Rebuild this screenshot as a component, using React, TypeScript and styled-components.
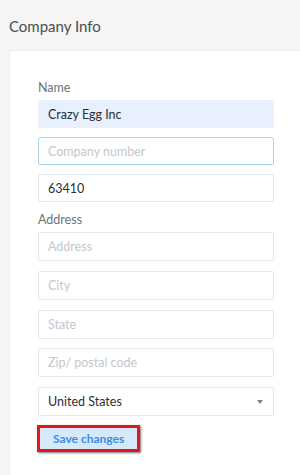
import styled, { createGlobalStyle } from "styled-components";

const GlobalStyle = createGlobalStyle`
  html, body {
    margin: 0;
    padding: 0;
    background: #f5f5f5;
    font-family: Lato, "Open Sans", "Liberation Sans", sans-serif;
    overflow: hidden;
  }
`;

const Page = styled.div`
  width: 300px;
  height: 475px;
  overflow: hidden;
  padding: 16px 0 0 9px;
  box-sizing: border-box;
`;

const Title = styled.h2`
  margin: 0 0 14px;
  font-size: 15px;
  font-weight: 400;
  color: #4a4d52;
  line-height: 20px;
`;

const CardBox = styled.div`
  width: 320px;
  min-height: 460px;
  background: #fff;
  border: 1px solid #ececec;
  border-radius: 3px;
  padding: 29px 0 0 28px;
  box-sizing: border-box;
`;

const Form = styled.form`
  width: 236px;
  display: flex;
  flex-direction: column;
`;

const Label = styled.label`
  font-size: 12.5px;
  color: #6f7277;
  line-height: 16px;
  margin-bottom: 4px;
`;

const Group = styled.div<{ $gap: number; $after: number }>`
  display: flex;
  flex-direction: column;
  gap: ${(p) => p.$gap}px;
  margin-bottom: ${(p) => p.$after}px;
`;

const Input = styled.input<{ $h: number; $filled?: boolean; $focus?: boolean }>`
  height: ${(p) => p.$h}px;
  box-sizing: border-box;
  border: 1px solid
    ${(p) => (p.$filled ? "#e8f0fe" : p.$focus ? "#a9d3f3" : "#e3e6ec")};
  border-radius: 2px;
  background: ${(p) => (p.$filled ? "#e8f0fe" : "#fff")};
  padding: 0 9px;
  font-family: inherit;
  font-size: 12.5px;
  color: #2d2f33;
  outline: none;
  &::placeholder {
    color: #c3c7ce;
  }
`;

const SelectBox = styled.div`
  height: 29px;
  box-sizing: border-box;
  border: 1px solid #e3e6ec;
  border-radius: 2px;
  display: flex;
  align-items: center;
  justify-content: space-between;
  padding: 0 10px 0 9px;
  font-size: 12.5px;
  color: #2d2f33;
`;

const Caret = styled.span`
  width: 0;
  height: 0;
  border-left: 3.5px solid transparent;
  border-right: 3.5px solid transparent;
  border-top: 4px solid #7b8694;
`;

const ButtonWrap = styled.div`
  align-self: flex-start;
  margin-left: -1px;
  border: 3px solid #e8141c;
  box-shadow: 1px 1px 2px rgba(0, 0, 0, 0.55);
`;

const SaveButton = styled.button`
  display: block;
  height: 21px;
  padding: 0 13px;
  border: none;
  background: #d5e9fa;
  color: #3b8ee0;
  font-family: inherit;
  font-weight: 700;
  font-size: 12px;
  cursor: pointer;
`;

export default function App() {
  return (
    <Page>
      <GlobalStyle />
      <Title>Company Info</Title>
      <CardBox>
        <Form onSubmit={(e) => e.preventDefault()}>
          <Label>Name</Label>
          <Group $gap={9} $after={10}>
            <Input $h={28} $filled defaultValue="Crazy Egg Inc" />
            <Input $h={28} $focus placeholder="Company number" />
            <Input $h={28} defaultValue="63410" />
          </Group>
          <Label>Address</Label>
          <Group $gap={9.75} $after={9}>
            <Input $h={29} placeholder="Address" />
            <Input $h={29} placeholder="City" />
            <Input $h={29} placeholder="State" />
            <Input $h={29} placeholder="Zip/ postal code" />
            <SelectBox>
              <span>United States</span>
              <Caret />
            </SelectBox>
          </Group>
          <ButtonWrap>
            <SaveButton type="submit">Save changes</SaveButton>
          </ButtonWrap>
        </Form>
      </CardBox>
    </Page>
  );
}
